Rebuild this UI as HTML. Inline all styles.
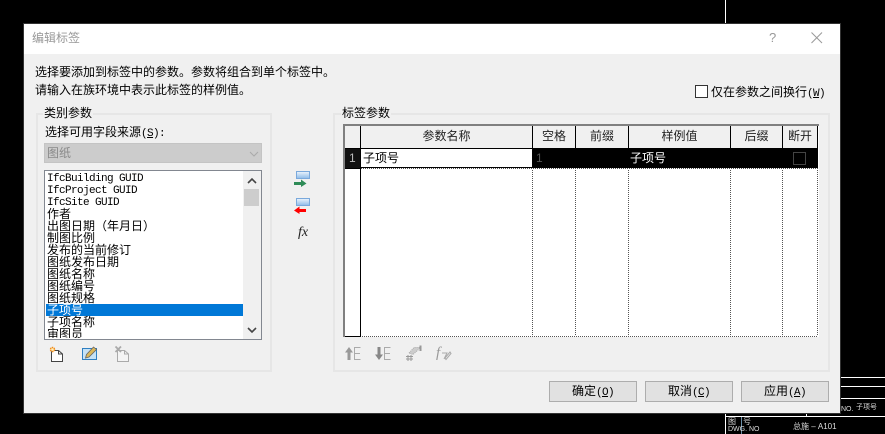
<!DOCTYPE html>
<html><head><meta charset="utf-8"><style>
html,body{margin:0;padding:0;background:#000;}
body{width:885px;height:434px;position:relative;overflow:hidden;font-family:"Liberation Sans","WenQuanYi Zen Hei","Noto Sans CJK SC",sans-serif;font-size:12px;color:#000;}
.a{position:absolute;}
.t{position:absolute;white-space:nowrap;line-height:14px;height:14px;}
.m{font-family:"Liberation Mono",monospace;font-size:11px;letter-spacing:-.6px;}
.m u{text-decoration:underline;}
.gb{position:absolute;border:2px solid #e6e6e6;box-sizing:border-box;}
.lg{position:absolute;background:#f0f0f0;padding:0 1px;line-height:14px;white-space:nowrap;}
.btn{position:absolute;top:381px;width:88px;height:21px;box-sizing:border-box;background:#e1e1e1;border:1px solid #adadad;text-align:center;line-height:19px;}
.li{position:absolute;left:47px;height:12px;line-height:12px;white-space:nowrap;}
.v{position:absolute;width:1px;background:#000;}
.d{position:absolute;width:1px;top:168px;height:168px;background:repeating-linear-gradient(to bottom,#555 0 1px,#fff 1px 2px);}
.hd{position:absolute;top:125px;height:23px;line-height:23px;text-align:center;color:#222;}
svg{position:absolute;overflow:visible;}
.w{position:absolute;background:#fff;}
.cad{position:absolute;color:#ddd;font-size:7px;line-height:9px;white-space:nowrap;}
</style></head><body>

<!-- CAD background -->
<div class="w" style="left:725px;top:0;width:1px;height:24px"></div>
<div class="w" style="left:841px;top:377px;width:44px;height:1px"></div>
<div class="w" style="left:841px;top:386px;width:44px;height:1px"></div>
<div class="w" style="left:841px;top:398px;width:44px;height:1px"></div>
<div class="w" style="left:725px;top:416px;width:160px;height:1px"></div>
<div class="w" style="left:725px;top:414px;width:1px;height:20px"></div>
<div class="w" style="left:806px;top:414px;width:1px;height:3px"></div>
<div class="a" style="left:741px;top:417px;width:1px;height:17px;background:#6a8fa8"></div>
<div class="cad" style="left:728px;top:417px;font-size:8px">图</div>
<div class="cad" style="left:743px;top:417px;font-size:8px">号</div>
<div class="cad" style="left:728px;top:425px">DWG. NO</div>
<div class="cad" style="left:793px;top:422px;font-size:8px">总施 – A101</div>
<div class="cad" style="left:841px;top:405px">NO.</div>
<div class="cad" style="left:856px;top:403px">子项号</div>

<!-- Dialog -->
<div class="a" style="left:23px;top:23px;width:818px;height:391px;box-sizing:border-box;border:1px solid #333;background:#f0f0f0"></div>
<div class="a" style="left:24px;top:24px;width:816px;height:30px;background:#fff"></div>
<div class="t" style="left:32px;top:31px;color:#999">编辑标签</div>
<div class="t" style="left:769px;top:31px;color:#999;font-size:13px">?</div>
<svg style="left:811px;top:32px" width="12" height="12"><path d="M.5 .5L11 11M11 .5L.5 11" stroke="#999" fill="none"/></svg>

<div class="t" style="left:35px;top:65px">选择要添加到标签中的参数。参数将组合到单个标签中。</div>
<div class="t" style="left:35px;top:83px">请输入在族环境中表示此标签的样例值。</div>

<div class="a" style="left:695px;top:85px;width:13px;height:13px;box-sizing:border-box;border:1px solid #333;background:#fff"></div>
<div class="t" style="left:711px;top:85px">仅在参数之间换行<span class="m">(<u>W</u>)</span></div>

<!-- Left group -->
<div class="gb" style="left:36px;top:113px;width:236px;height:259px"></div>
<div class="lg" style="left:43px;top:106px">类别参数</div>
<div class="t" style="left:45px;top:125px">选择可用字段来源<span class="m">(<u>S</u>):</span></div>
<div class="a" style="left:44px;top:143px;width:218px;height:20px;background:#ccc;border:1px solid #c4c4c4;box-sizing:border-box"></div>
<div class="t" style="left:47px;top:146px;color:#8a8a8a">图纸</div>
<svg style="left:249px;top:151px" width="10" height="6"><path d="M1 1L5 5L9 1" stroke="#aaa" fill="none"/></svg>

<!-- Listbox -->
<div class="a" style="left:44px;top:170px;width:218px;height:170px;box-sizing:border-box;border:1px solid #828790;background:#fff"></div>
<div class="a" style="left:243px;top:171px;width:18px;height:168px;background:#f0f0f0"></div>
<div class="a" style="left:244px;top:189px;width:15px;height:17px;background:#cdcdcd"></div>
<svg style="left:247px;top:178px" width="10" height="6"><path d="M1 5L5 1L9 5" stroke="#444" stroke-width="1.6" fill="none"/></svg>
<svg style="left:247px;top:327px" width="10" height="6"><path d="M1 1L5 5L9 1" stroke="#444" stroke-width="1.6" fill="none"/></svg>
<div class="a" style="left:46px;top:304px;width:197px;height:12px;background:#0078d7"></div>
<div class="li m" style="top:173px">IfcBuilding GUID</div>
<div class="li m" style="top:185px">IfcProject GUID</div>
<div class="li m" style="top:197px">IfcSite GUID</div>
<div class="li" style="top:208px">作者</div>
<div class="li" style="top:220px">出图日期（年月日）</div>
<div class="li" style="top:232px">制图比例</div>
<div class="li" style="top:244px">发布的当前修订</div>
<div class="li" style="top:256px">图纸发布日期</div>
<div class="li" style="top:268px">图纸名称</div>
<div class="li" style="top:280px">图纸编号</div>
<div class="li" style="top:292px">图纸规格</div>
<div class="li" style="top:304px;color:#fff">子项号</div>
<div class="li" style="top:316px">子项名称</div>
<div class="li" style="top:328px;height:10px;overflow:hidden">审图员</div>

<!-- Left bottom icons -->
<svg style="left:49px;top:346px" width="16" height="16"><path d="M2.500 4.500H9.500L13.500 8V15.500H2.500Z" fill="#fff" stroke="#444"/><path d="M9.500 4.500V8H13.500" fill="none" stroke="#444"/><circle cx="3.500" cy="3.500" r="2" fill="#fff3c0" stroke="#f08a1a" stroke-width="1.500" stroke-dasharray="1.500 .6"/></svg>
<svg style="left:82px;top:347px" width="16" height="14"><rect x=".5" y="1.500" width="14" height="11" fill="#c6e2f6" stroke="#2f7fc1"/><path d="M3.500 11L4.500 7.500L11.500 0L14.500 2.500L7 10Z" fill="#dcb85a" stroke="#666" stroke-width=".8"/></svg>
<svg style="left:115px;top:346px" width="16" height="16"><path d="M2.500 4.500H9.500L13.500 8V15.500H2.500Z" fill="#f4f4f4" stroke="#aaa"/><path d="M9.500 4.500V8H13.500" fill="none" stroke="#aaa"/><path d="M.5 .5L6 6M6 .5L.5 6" stroke="#aaa" stroke-width="1.800"/></svg>

<!-- Middle arrows -->
<svg style="left:294px;top:171px" width="17" height="17"><defs><linearGradient id="g" x1="0" y1="0" x2="0" y2="1"><stop offset="0" stop-color="#eef5fc"/><stop offset="1" stop-color="#8dbbe9"/></linearGradient></defs><rect x="2.500" y=".5" width="13" height="7" fill="url(#g)" stroke="#7aa9dc"/><path d="M0 11H7V8.500L12.500 12.500L7 16V14H0Z" fill="#2e8b57"/></svg>
<svg style="left:294px;top:198px" width="17" height="17"><rect x="2.500" y=".5" width="13" height="7" fill="url(#g)" stroke="#7aa9dc"/><path d="M12 11H5.500V8.500L0 12.500L5.500 16V14H12Z" fill="#f00"/></svg>
<div class="t" style="left:298px;top:226px;font-family:'Liberation Serif',serif;font-style:italic;font-size:14px;color:#222">fx</div>

<!-- Right group -->
<div class="gb" style="left:333px;top:113px;width:497px;height:259px"></div>
<div class="lg" style="left:341px;top:106px">标签参数</div>

<!-- Grid -->
<div class="a" style="left:343px;top:124px;width:476px;height:213px;background:#fff"></div>
<div class="a" style="left:345px;top:126px;width:473px;height:22px;background:#f0f0f0"></div>
<div class="a" style="left:343px;top:124px;width:476px;height:2px;background:#808080"></div>
<div class="a" style="left:343px;top:124px;width:2px;height:213px;background:#808080"></div>
<div class="a" style="left:345px;top:148px;width:473px;height:20px;background:#000"></div>
<div class="a" style="left:345px;top:149px;width:15px;height:19px;background:#111"></div>
<div class="a" style="left:361px;top:149px;width:171px;height:18px;background:#fff"></div>
<div class="v" style="left:360px;top:126px;height:211px"></div>
<div class="v" style="left:532px;top:126px;height:22px"></div>
<div class="v" style="left:575px;top:126px;height:22px"></div>
<div class="v" style="left:628px;top:126px;height:22px"></div>
<div class="v" style="left:730px;top:126px;height:22px"></div>
<div class="v" style="left:782px;top:126px;height:22px"></div>
<div class="v" style="left:817px;top:126px;height:22px"></div>
<div class="d" style="left:532px"></div>
<div class="d" style="left:575px"></div>
<div class="d" style="left:628px"></div>
<div class="d" style="left:730px"></div>
<div class="d" style="left:782px"></div>
<div class="d" style="left:817px"></div>
<div class="a" style="left:345px;top:336px;width:16px;height:1px;background:#000"></div>
<div class="a" style="left:362px;top:336px;width:456px;height:1px;background:repeating-linear-gradient(to right,#555 0 1px,#fff 1px 2px)"></div>
<div class="a" style="left:345px;top:168px;width:16px;height:1px;background:#000"></div>
<div class="a" style="left:361px;top:168px;width:457px;height:1px;background:repeating-linear-gradient(to right,#555 0 1px,#fff 1px 2px)"></div>
<div class="hd" style="left:361px;width:171px">参数名称</div>
<div class="hd" style="left:533px;width:42px">空格</div>
<div class="hd" style="left:576px;width:52px">前缀</div>
<div class="hd" style="left:629px;width:101px">样例值</div>
<div class="hd" style="left:731px;width:51px">后缀</div>
<div class="hd" style="left:783px;width:34px">断开</div>
<div class="t" style="left:349px;top:151px;color:#bbb">1</div>
<div class="t" style="left:363px;top:151px">子项号</div>
<div class="t" style="left:536px;top:151px;color:#555">1</div>
<div class="t" style="left:630px;top:151px;color:#fff">子项号</div>
<div class="a" style="left:793px;top:152px;width:13px;height:13px;box-sizing:border-box;border:1px solid #444;background:#000"></div>

<!-- Grid bottom icons -->
<svg style="left:345px;top:347px" width="17" height="14"><path d="M4 0L8 5.500H5.500V13H2.500V5.500H0Z" fill="#999"/><path d="M15.500 .5H9.500V12.500H15.500M9.500 6.500H15" fill="none" stroke="#aaa"/></svg>
<svg style="left:375px;top:347px" width="17" height="14"><path d="M4 13L8 7.500H5.500V0H2.500V7.500H0Z" fill="#888"/><path d="M15.500 .5H9.500V12.500H15.500M9.500 6.500H15" fill="none" stroke="#aaa"/></svg>
<svg style="left:405px;top:345px" width="18" height="16"><path d="M3 10V16M6 10V16M1 11.500H8M1 14H8" stroke="#999" fill="none"/><path d="M4 8L9 2.500H15L13 5L8 9.500Z" fill="#ccc" stroke="#aaa" stroke-dasharray="1 1"/><path d="M15.500 .5V6" stroke="#999" stroke-width="2"/></svg>
<div class="t" style="left:436px;top:346px;font-family:'Liberation Serif',serif;font-style:italic;font-size:15px;color:#999">f</div>
<svg style="left:441px;top:349px" width="11" height="12"><path d="M1 4H6L3 10M4 9L9 3L10 4.500L5 10.500Z" fill="none" stroke="#aaa"/></svg>

<!-- Buttons -->
<div class="btn" style="left:549px">确定<span class="m">(<u>O</u>)</span></div>
<div class="btn" style="left:645px">取消<span class="m">(<u>C</u>)</span></div>
<div class="btn" style="left:741px">应用<span class="m">(<u>A</u>)</span></div>

</body></html>
